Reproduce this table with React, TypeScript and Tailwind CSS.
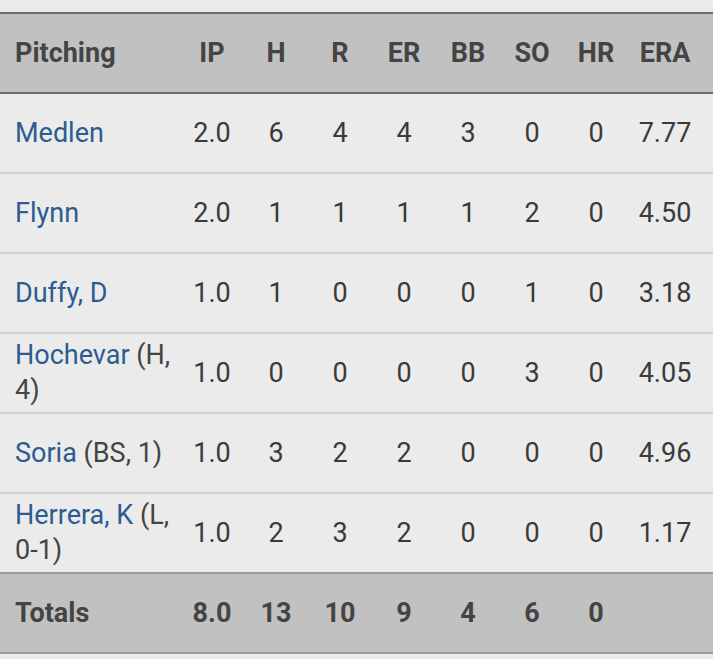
const headers = ["IP", "H", "R", "ER", "BB", "SO", "HR", "ERA"];

const pitchers = [
  { name: "Medlen", note: "", stats: ["2.0", "6", "4", "4", "3", "0", "0", "7.77"] },
  { name: "Flynn", note: "", stats: ["2.0", "1", "1", "1", "1", "2", "0", "4.50"] },
  { name: "Duffy, D", note: "", stats: ["1.0", "1", "0", "0", "0", "1", "0", "3.18"] },
  { name: "Hochevar", note: "(H, 4)", stats: ["1.0", "0", "0", "0", "0", "3", "0", "4.05"] },
  { name: "Soria", note: "(BS, 1)", stats: ["1.0", "3", "2", "2", "0", "0", "0", "4.96"] },
  { name: "Herrera, K", note: "(L, 0-1)", stats: ["1.0", "2", "3", "2", "0", "0", "0", "1.17"] },
];

const totals = ["8.0", "13", "10", "9", "4", "6", "0", ""];

const cols = "grid grid-cols-[180px_repeat(7,64px)_74px] items-center";

export default function App() {
  return (
    <div
      className="w-[713px] h-[659px] bg-[#ebebeb] pt-3 overflow-hidden"
      style={{ fontFamily: "Roboto, 'Liberation Sans', sans-serif" }}
    >
      <div className={`${cols} h-[82px] bg-[#c1c1c1] border-y-2 border-[#6d6d6d] text-[27px] font-bold text-[#444]`}>
        <div className="pl-[15px]">Pitching</div>
        {headers.map((h) => (
          <div key={h} className="text-center">
            {h}
          </div>
        ))}
      </div>

      {pitchers.map((p, i) => (
        <div
          key={p.name}
          className={`${cols} h-[80px] text-[27px] text-[#3a3a3a] border-b-2 ${
            i < pitchers.length - 1 ? "border-[#d0d0d0]" : "border-[#9c9c9c]"
          }`}
        >
          <div className="pl-[15px] leading-[35px]">
            <span className="text-[#2c5b92]">{p.name}</span>
            {p.note && <span className="text-[#444]"> {p.note}</span>}
          </div>
          {p.stats.map((s, j) => (
            <div key={j} className="text-center">
              {s}
            </div>
          ))}
        </div>
      ))}

      <div className={`${cols} h-[80px] bg-[#c1c1c1] border-b-2 border-[#9c9c9c] text-[27px] font-bold text-[#444]`}>
        <div className="pl-[15px]">Totals</div>
        {totals.map((t, j) => (
          <div key={j} className="text-center">
            {t}
          </div>
        ))}
      </div>
    </div>
  );
}
